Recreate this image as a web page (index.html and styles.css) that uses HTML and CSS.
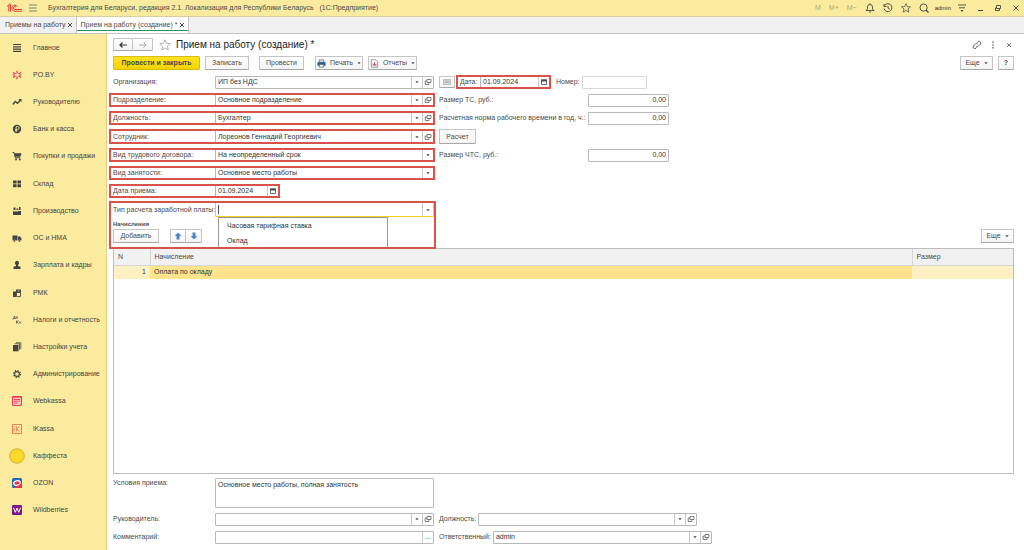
FILE: index.html
```
<!DOCTYPE html>
<html lang="ru">
<head>
<meta charset="utf-8">
<title>Прием на работу (создание)</title>
<link rel="stylesheet" href="styles.css">
</head>
<body>
<svg class="defs" aria-hidden="true">
  <symbol id="open" viewBox="0 0 8 8"><path d="M3 1.500h4v3H3zM3 3H1.200v3.500H5V4.500" fill="none" stroke="currentColor" stroke-width=".7"/></symbol>
  <symbol id="caret" viewBox="0 0 8 8"><path d="M2.300 3.200h3.400L4 5.300z" fill="currentColor"/></symbol>
  <symbol id="cal" viewBox="0 0 8 8"><path d="M1.500 2h5v4.500h-5z" fill="none" stroke="currentColor" stroke-width=".8"/><path d="M1 1.500h6v2H1z" fill="currentColor"/></symbol>
  <symbol id="cross" viewBox="0 0 8 8"><path d="M2 2l4 4M6 2L2 6" fill="none" stroke="currentColor"/></symbol>
  <symbol id="star" viewBox="0 0 12 12"><path d="M6 .8l1.500 3.500 3.800.3-2.900 2.500.9 3.800L6 8.900l-3.300 2 .9-3.800L.7 4.600l3.800-.3z" fill="none" stroke="currentColor" stroke-width=".9"/></symbol>
</svg>

<header class="topbar">
  <svg class="logo" viewBox="0 0 17 10" aria-label="1С"><g fill="none" stroke="#dc3a34" stroke-width="1"><path d="M1 3.500L2.800 2v6.500M4.500 8.500V1.200H3"/><path d="M11.500 3.500A3 3 0 1 0 8.800 8.200H16"/><path d="M9.900 4A1.400 1.400 0 1 0 8.800 6.400H16"/></g></svg>
  <svg class="ico" viewBox="0 0 10 10"><path d="M1 2h8M1 5h8M1 8h8" stroke="#666" stroke-width=".8"/></svg>
  <span class="app-title">Бухгалтерия для Беларуси, редакция 2.1. Локализация для Республики Беларусь &nbsp; (1С:Предприятие)</span>
  <div class="top-tools">
    <span class="mem">M</span><span class="mem">M+</span><span class="mem">M−</span>
    <svg class="ico" viewBox="0 0 10 10"><path d="M1 7.500h8L7.500 6V4a2.500 2.500 0 0 0-5 0v2zM4 9h2M5 .5v1" fill="none" stroke="#444" stroke-width=".9"/></svg>
    <svg class="ico" viewBox="0 0 10 10"><path d="M1.200 3.200A4 4 0 1 1 1 5.500M1 1v2.500h2.500M5 2.800V5l1.800 1" fill="none" stroke="#444" stroke-width=".9"/></svg>
    <svg class="ico"><use href="#star"/></svg>
    <svg class="ico" viewBox="0 0 10 10"><circle cx="4.600" cy="4.600" r="3.600" fill="none" stroke="#444" stroke-width=".9"/><path d="M7 7l2.500 2.500" stroke="#444" stroke-width="1.200"/></svg>
    <span class="user">admin</span>
    <svg class="ico" viewBox="0 0 10 10"><path d="M1 2h8M2 4.800h6" stroke="#444" stroke-width=".9"/><path d="M3.500 7h3L5 9z" fill="#444"/></svg>
    <svg class="ico" viewBox="0 0 10 10"><path d="M3 7.500h5" stroke="#444"/></svg>
    <svg class="ico" viewBox="0 0 10 10"><path d="M3.500 2.500h4v3h-4zM2.500 4.500v3h4v-2" fill="none" stroke="#444" stroke-width=".9"/></svg>
    <svg class="ico" viewBox="0 0 10 10"><path d="M2.500 2.500l5 5M7.500 2.500l-5 5" stroke="#444" stroke-width=".9"/></svg>
  </div>
</header>

<nav class="tabs">
  <div class="tab"><a href="#list">Приемы на работу</a><button class="bare" aria-label="Закрыть"><svg class="s8"><use href="#cross"/></svg></button></div>
  <div class="tab active"><a href="#doc">Прием на работу (создание) *</a><button class="bare" aria-label="Закрыть"><svg class="s8"><use href="#cross"/></svg></button></div>
</nav>

<div class="body">
  <nav class="side">
    <a href="#1"><svg viewBox="0 0 10 10"><path d="M1 1.500h8M1 3.800h8M1 6.100h8M1 8.400h8" stroke="#444" stroke-width="1.200"/></svg>Главное</a>
    <a href="#2"><svg viewBox="0 0 10 10"><path d="M5 .8v3M5 6.200v3M1 2.500l2.500 1.500M9 2.500L6.500 4M1 7.500L3.500 6M9 7.500L6.500 6M.8 5h2M7.200 5h2" stroke="#e0315a" stroke-width="1.100"/></svg>PO.BY</a>
    <a href="#3"><svg viewBox="0 0 10 10"><path d="M.8 7.500l2.500-3 2.200 1.800L8.500 3" fill="none" stroke="#444" stroke-width="1.300"/><path d="M6.300 2h3.200v3.200z" fill="#444"/></svg>Руководителю</a>
    <a href="#4"><svg viewBox="0 0 10 10"><circle cx="5" cy="5" r="4.200" fill="#444"/><path d="M4.200 8V2.500h1.500a1.400 1.400 0 0 1 0 2.900H3M3 6.700h2.500" fill="none" stroke="#fbeb9e" stroke-width=".8"/></svg>Банк и касса</a>
    <a href="#5"><svg viewBox="0 0 10 10"><path d="M.5 1.500h1.500l1.300 5.300h5" fill="none" stroke="#444"/><path d="M2.300 2.200h7.200L8.400 5.800H3z" fill="#444"/><circle cx="4" cy="8.500" r="1" fill="#444"/><circle cx="7.800" cy="8.500" r="1" fill="#444"/></svg>Покупки и продажи</a>
    <a href="#6"><svg viewBox="0 0 10 10"><path d="M1 1.500h3.600v3H1zM5.400 1.500H9v3H5.400zM1 5.300h3.600v3H1zM5.400 5.300H9v3H5.400z" fill="#444"/></svg>Склад</a>
    <a href="#7"><svg viewBox="0 0 10 10"><path d="M1 9V5l2.500 1V4.800L6 6V5h3v4zM1.500 1.500h2v2.500h-2zM4.500 2.500h1.800v1.500H4.500zM7 1h1.500v3H7z" fill="#444"/></svg>Производство</a>
    <a href="#8"><svg viewBox="0 0 10 10"><path d="M.5 2.500h5v5h-5zM6 3.500h2.200L9.500 5.500v2H6z" fill="#444"/><circle cx="2.500" cy="8" r="1.100" fill="#444" stroke="#fbeb9e" stroke-width=".4"/><circle cx="7.500" cy="8" r="1.100" fill="#444" stroke="#fbeb9e" stroke-width=".4"/></svg>ОС и НМА</a>
    <a href="#9"><svg viewBox="0 0 10 10"><path d="M5 .8a2.100 2.300 0 0 1 1 4.300v.8l2.500.9V9h-7V6.800L4 5.900v-.8A2.100 2.300 0 0 1 5 .8z" fill="#444"/></svg>Зарплата и кадры</a>
    <a href="#10"><svg viewBox="0 0 10 10"><path d="M1 3.500h3V9H1zM4 1.500h5v3H4z" fill="#444"/><path d="M4.500 4.500h4V8.600h-4zM5 4V2.500h3" fill="none" stroke="#444" stroke-width=".9"/><path d="M5.500 3h2" stroke="#fbeb9e" stroke-width=".7"/></svg>РМК</a>
    <a href="#11"><svg viewBox="0 0 10 10"><path d="M1 4.500L2.500 1 3.500 3.800M1.500 3.500h2M4 2h2M5 2v2M4.500 5.500v3M6.500 5.500L4.800 7l1.700 1.500M7 6.500l2 2M9 6.500l-2 2" fill="none" stroke="#555" stroke-width=".8"/></svg>Налоги и отчетность</a>
    <a href="#12"><svg viewBox="0 0 10 10"><path d="M1 3h5.500v6.300H1z" fill="#444"/><path d="M2.500 1.800h5v6M4 .8h4.800v6.200" fill="none" stroke="#444" stroke-width=".8"/></svg>Настройки учета</a>
    <a href="#13"><svg viewBox="0 0 10 10"><circle cx="5" cy="5" r="2.400" fill="none" stroke="#444" stroke-width="1.100"/><circle cx="5" cy="5" r="3.400" fill="none" stroke="#444" stroke-width="1.300" stroke-dasharray="1.300 1.370"/></svg>Администрирование</a>
    <a href="#14"><svg viewBox="0 0 10 10"><path d="M.6.6h8.800v8.800H.6z" fill="#fbd5c5" stroke="#ea2a4d"/><path d="M.5 1.200h9M2 3.500h6M2 5.200h6M2 7h3.500" stroke="#ea2a4d" stroke-width=".9"/></svg>Webkassa</a>
    <a href="#15"><svg viewBox="0 0 10 10"><path d="M.5.5h9v9h-9z" fill="none" stroke="#e5644f" stroke-width=".8"/><path d="M2 4v3.500M2 2.300v.8M4.300 2.300v5.200M7.500 2.300L4.500 5l3 2.500" fill="none" stroke="#e5644f" stroke-width=".8"/></svg>iKassa</a>
    <a href="#16"><svg class="big" viewBox="0 0 16 16"><circle cx="8" cy="8" r="7.300" fill="#fbd928" stroke="#b99a2a" stroke-width=".7"/><circle cx="8" cy="8" r="5" fill="none" stroke="#edc81c" stroke-width=".6" stroke-dasharray="1 1"/></svg>Каффеста</a>
    <a href="#17"><svg viewBox="0 0 10 10"><rect width="10" height="10" rx="1.500" fill="#2468b4"/><path d="M10 4v4.500A1.500 1.500 0 0 1 8.500 10H2z" fill="#f0304c"/><ellipse cx="5" cy="5" rx="3.400" ry="2.200" transform="rotate(-15 5 5)" fill="#f0304c" stroke="#fff" stroke-width="1.200"/></svg>OZON</a>
    <a href="#18"><svg viewBox="0 0 10 10"><rect width="10" height="10" rx="1" fill="#7d1b8d"/><path d="M1.500 2.800l1.800 4.500L5 3.200l1.700 4.100 1.800-4.500" fill="none" stroke="#fff"/></svg>Wildberries</a>
  </nav>

  <main class="doc">
    <div class="title-row">
      <div class="pair nav-pair"><button class="btn" aria-label="Назад"><svg class="arr" viewBox="0 0 10 8"><path d="M9 4H2M4.500 1.500L2 4l2.500 2.500" fill="none" stroke="#333" stroke-width="1.200"/></svg></button><button class="btn" aria-label="Вперед"><svg class="arr" viewBox="0 0 10 8"><path d="M1 4h7M5.500 1.500L8 4 5.500 6.500" fill="none" stroke="#aaa"/></svg></button></div>
      <svg class="fav"><use href="#star"/></svg>
      <h1>Прием на работу (создание) *</h1>
      <div class="title-tools">
        <svg class="ico" viewBox="0 0 10 10"><path d="M4.200 6a1.700 1.700 0 0 0 2.400 0l1.800-1.800A1.700 1.700 0 0 0 6 1.800l-1 1M5.800 4a1.700 1.700 0 0 0-2.400 0L1.600 5.800A1.700 1.700 0 0 0 4 8.200l1-1" fill="none" stroke="#555" stroke-width=".9"/></svg>
        <svg class="ico" viewBox="0 0 10 10"><path d="M5 1.500v1.500M5 4.300v1.500M5 7.100v1.500" stroke="#555" stroke-width="1.200"/></svg>
        <svg class="ico" viewBox="0 0 10 10"><path d="M3 3l4 4M7 3L3 7" stroke="#666" stroke-width=".9"/></svg>
      </div>
    </div>

    <div class="toolbar">
      <button class="btn primary">Провести и закрыть</button>
      <button class="btn save">Записать</button>
      <button class="btn post">Провести</button>
      <button class="btn print"><svg class="s9" viewBox="0 0 10 10"><path d="M2.500 1h5v2.500h-5z" fill="#fff" stroke="#456" stroke-width=".8"/><path d="M.5 3.500h9v4h-9z" fill="#2f5f93"/><path d="M2.500 6h5v3h-5z" fill="#fff" stroke="#456" stroke-width=".8"/></svg>Печать<svg class="s8 drop"><use href="#caret"/></svg></button>
      <button class="btn reports"><svg class="s9" viewBox="0 0 10 10"><path d="M1.500.8h5L8.500 3v6.200h-7z" fill="#fff" stroke="#777" stroke-width=".8"/><path d="M3.500 7.500V5" stroke="#2f5f93"/><path d="M5 7.500v-4" stroke="#d33"/><path d="M6.500 7.500v-2" stroke="#444"/></svg>Отчеты<svg class="s8 drop"><use href="#caret"/></svg></button>
      <button class="btn more">Еще<svg class="s8 drop"><use href="#caret"/></svg></button>
      <button class="btn help">?</button>
    </div>

    <div class="form">
      <div class="row"><label for="org">Организация:</label><div class="field"><input id="org" value="ИП без НДС"><button aria-label="Выбрать"><svg><use href="#caret"/></svg></button><button aria-label="Открыть"><svg><use href="#open"/></svg></button></div></div>
      <div class="row">
        <button class="btn list-btn" aria-label="Список"><svg class="s8" viewBox="0 0 8 8"><path d="M.5 1.500h7v5h-7z" fill="#ddd" stroke="#aaa" stroke-width=".7"/><path d="M1.500 3h5M1.500 4.500h5" stroke="#999" stroke-width=".6"/></svg></button>
        <div class="date-box marked"><label for="date">Дата:</label><div class="field"><input id="date" value="01.09.2024"><button aria-label="Календарь"><svg><use href="#cal"/></svg></button></div></div>
        <label for="num" class="num-label">Номер:</label><div class="field num"><input id="num"></div>
      </div>

      <div class="row marked"><label for="dep">Подразделение:</label><div class="field"><input id="dep" value="Основное подразделение"><button aria-label="Выбрать"><svg><use href="#caret"/></svg></button><button aria-label="Открыть"><svg><use href="#open"/></svg></button></div></div>
      <div class="row"><label class="wide" for="ts">Размер ТС, руб.:</label><div class="field sum"><input id="ts" value="0,00"></div></div>

      <div class="row marked"><label for="pos">Должность:</label><div class="field"><input id="pos" value="Бухгалтер"><button aria-label="Выбрать"><svg><use href="#caret"/></svg></button><button aria-label="Открыть"><svg><use href="#open"/></svg></button></div></div>
      <div class="row"><label class="wide" for="norm">Расчетная норма рабочего времени в год, ч.:</label><div class="field sum"><input id="norm" value="0,00"></div></div>

      <div class="row marked"><label for="emp">Сотрудник:</label><div class="field"><input id="emp" value="Лореонов Геннадий Георгиевич"><button aria-label="Выбрать"><svg><use href="#caret"/></svg></button><button aria-label="Открыть"><svg><use href="#open"/></svg></button></div></div>
      <div class="row"><button class="btn calc">Расчет</button></div>

      <div class="row marked"><label for="kind">Вид трудового договора:</label><div class="field"><input id="kind" value="На неопределенный срок"><button aria-label="Выбрать"><svg><use href="#caret"/></svg></button></div></div>
      <div class="row"><label class="wide" for="chts">Размер ЧТС, руб.:</label><div class="field sum"><input id="chts" value="0,00"></div></div>

      <div class="row marked"><label for="busy">Вид занятости:</label><div class="field"><input id="busy" value="Основное место работы"><button aria-label="Выбрать"><svg><use href="#caret"/></svg></button></div></div>
      <div class="row"></div>

      <div class="row marked short"><label for="hired">Дата приема:</label><div class="field"><input id="hired" value="01.09.2024"><button aria-label="Календарь"><svg><use href="#cal"/></svg></button></div></div>
    </div>

    <div class="pay">
      <div class="pay-group marked">
        <div class="row"><label for="type">Тип расчета заработной платы:</label>
          <div class="field focus"><span class="caret"></span><input id="type"><button aria-label="Выбрать"><svg><use href="#caret"/></svg></button>
            <ul class="menu"><li>Часовая тарифная ставка</li><li>Оклад</li></ul>
          </div>
        </div>
        <h2>Начисления</h2>
        <div class="cmds">
          <button class="btn add">Добавить</button>
          <div class="pair"><button class="btn" aria-label="Вверх"><svg class="s8" viewBox="0 0 8 8"><path d="M4 .5l3.300 3.500H5.500v3.500h-3V4H.7z" fill="#4b86c6"/></svg></button><button class="btn" aria-label="Вниз"><svg class="s8" viewBox="0 0 8 8"><path d="M4 7.500L.7 4h1.800V.5h3V4h1.800z" fill="#4b86c6"/></svg></button></div>
        </div>
      </div>
      <button class="btn more">Еще<svg class="s8 drop"><use href="#caret"/></svg></button>
    </div>

    <div class="grid-box">
      <table>
        <thead><tr><th class="c-n">N</th><th>Начисление</th><th class="c-size">Размер</th></tr></thead>
        <tbody><tr><td class="c-n">1</td><td class="current">Оплата по окладу</td><td></td></tr></tbody>
      </table>
    </div>

    <div class="bottom">
      <div class="row tall"><label for="terms">Условия приема:</label><textarea id="terms">Основное место работы, полная занятость</textarea></div>
      <div class="row"></div>
      <div class="row"><label for="head">Руководитель:</label><div class="field"><input id="head"><button aria-label="Выбрать"><svg><use href="#caret"/></svg></button><button aria-label="Открыть"><svg><use href="#open"/></svg></button></div></div>
      <div class="row"><label class="auto" for="hpos">Должность:</label><div class="field fixed"><input id="hpos"><button aria-label="Выбрать"><svg><use href="#caret"/></svg></button><button aria-label="Открыть"><svg><use href="#open"/></svg></button></div></div>
      <div class="row"><label for="note">Комментарий:</label><div class="field"><input id="note"><button>...</button></div></div>
      <div class="row"><label class="auto" for="resp">Ответственный:</label><div class="field fixed"><input id="resp" value="admin"><button aria-label="Выбрать"><svg><use href="#caret"/></svg></button><button aria-label="Открыть"><svg><use href="#open"/></svg></button></div></div>
    </div>
  </main>
</div>
</body>
</html>
```
FILE: styles.css
```
* { box-sizing: border-box; }
html, body { height: 100%; }
body {
  margin: 0;
  display: flex;
  flex-direction: column;
  font: 7px/10px "Liberation Sans", Arial, sans-serif;
  color: #4a4a4a;
  background: #fff;
}
button, input, textarea { font: inherit; color: inherit; margin: 0; padding: 0; }
a { color: inherit; text-decoration: none; }
svg { display: block; flex: none; }
.defs { position: absolute; width: 0; height: 0; }
.s8 { width: 8px; height: 8px; }
.s9 { width: 9px; height: 9px; }
.ico { width: 10px; height: 10px; }

.topbar {
  display: flex;
  align-items: center;
  flex: none;
  height: 17px;
  padding: 0 3px 0 6px;
  background: #fbeb9e;
  border-bottom: 1px solid #d8cf9f;
}
.logo { width: 17px; height: 10px; margin-right: 5px; }
.app-title { margin-left: 10px; white-space: nowrap; }
.top-tools { display: flex; align-items: center; gap: 8px; margin-left: auto; }
.mem { color: #b3a873; }
.user { color: #333; font-size: 6px; margin: 0 -2px; }

.tabs {
  display: flex;
  flex: none;
  height: 17px;
  background: #f1f1f1;
  border-bottom: 1px solid #c4c4c4;
}
.tab { display: flex; align-items: center; padding: 0 2px 0 5px; border-right: 1px solid #c4c4c4; }
.tab.active { gap: 1px; padding-left: 4px; background: #fff; box-shadow: inset 0 -2px #fff, inset 0 -3px #1d9b57; }
.bare { border: 0; background: none; }

.body { display: flex; flex: 1; min-height: 0; }
.side {
  display: grid;
  grid-auto-rows: 1fr;
  flex: none;
  width: 107px;
  padding-bottom: 26px;
  background: #fbeb9e;
  border-right: 1px solid #e4d27c;
}
.side a { display: flex; align-items: center; gap: 11px; padding-left: 12px; color: #444; white-space: nowrap; }
.side svg { width: 10px; height: 10px; }
.side .big { width: 16px; height: 16px; margin: 0 -3px; }

.doc { display: flex; flex-direction: column; flex: 1; min-width: 0; padding: 4px 10px 6px 6px; }
.title-row { display: flex; align-items: center; height: 13px; }
h1 { margin: 0 0 0 5px; font-size: 10px; line-height: 13px; font-weight: normal; color: #222; }
.fav { width: 12px; height: 12px; margin-left: 6px; color: #aaa; }
.title-tools { display: flex; gap: 6px; margin-left: auto; }

.btn {
  display: flex;
  align-items: center;
  justify-content: center;
  flex: none;
  height: 14px;
  border: 1px solid #c4c4c4;
  border-bottom-color: #a8a8a8;
  border-radius: 1px;
  background: linear-gradient(#fff, #f4f4f4);
}
.pair { display: flex; }
.pair .btn { width: 16px; }
.pair .btn + .btn { border-left: 0; }
.nav-pair .btn { width: 20px; height: 13px; }
.arr { width: 10px; height: 8px; }
.toolbar { display: flex; margin-top: 5px; gap: 5px; }
.drop { margin: 0 -2px; }
.primary { width: 87px; font-weight: bold; background: linear-gradient(#ffe320, #f7d400); border-color: #d9bc10; }
.save { width: 44px; }
.post { width: 45px; margin-left: 5px; }
.print { width: 48px; gap: 4px; margin-left: 6px; }
.reports { width: 49px; gap: 4px; }
.more { width: 33px; gap: 4px; margin-left: auto; }
.help { width: 16px; font-weight: bold; }

.form, .bottom { display: grid; grid-template-columns: 321px 1fr; column-gap: 5px; row-gap: 4px; }
.form { margin-top: 5px; }
.row { display: flex; align-items: center; position: relative; min-height: 14px; }
.row > label { flex: none; width: 102px; white-space: nowrap; }
.row > label.wide { width: 149px; }
.row > label.auto { width: auto; margin-right: 2px; }
.field {
  display: flex;
  flex: 1;
  min-width: 0;
  height: 13px;
  position: relative;
  border: 1px solid #b8b8b8;
  border-radius: 1px;
  background: #fff;
}
.field input { flex: 1; min-width: 0; width: 100%; border: 0; padding: 0 2px; background: none; outline: 0; color: #333; }
.field button {
  display: flex;
  align-items: center;
  justify-content: center;
  width: 11px;
  border: 0;
  border-left: 1px solid #c8c8c8;
  background: none;
}
.field button svg { width: 8px; height: 8px; }
.field.sum { flex: none; width: 81px; }
.field.sum input { text-align: right; }
.field.fixed { flex: none; width: 219px; }
.field.num { flex: none; width: 65px; border-color: #d8d8d8; }
.row > label.num-label { width: 26px; margin-left: 5px; }
.list-btn { width: 16px; height: 12px; }
.date-box { display: flex; align-items: center; position: relative; width: 95px; height: 14px; margin-left: 1px; padding: 0 1px 0 4px; }
.date-box label { width: 20px; }
.short { width: 166px; }
.calc { width: 37px; height: 15px; }

/* red frames drawn over the fields to be filled in */
.marked::after {
  content: "";
  position: absolute;
  inset: 0 -1px 0 -4px;
  border: 2px solid #d9534a;
  pointer-events: none;
}
.date-box.marked::after { inset: 0; }

.pay { display: flex; align-items: flex-end; margin-top: 4px; }
.pay-group { position: relative; width: 321px; }
.pay-group.marked::after { inset: -1px -2px -6px -4px; z-index: 2; }
.field.focus { height: 15px; border-color: #f2cf1d; }
.caret { align-self: center; width: 1px; height: 9px; margin-left: 2px; background: #555; }
.menu {
  position: absolute;
  z-index: 1;
  top: 14px;
  left: 2px;
  width: 170px;
  margin: 0;
  padding: 0 8px;
  list-style: none;
  background: #fff;
  border: 1px solid #999;
  color: #333;
  line-height: 15px;
}
h2 { margin: 3px 0 0; font-size: 6px; line-height: 9px; font-weight: bold; }
.cmds { display: flex; gap: 11px; }
.add { width: 46px; }

.grid-box { flex: 1; min-height: 40px; margin: 5px 0 4px; border: 1px solid #bdbdbd; }
table { width: 100%; border-collapse: collapse; table-layout: fixed; }
th { height: 16px; padding: 0 4px; background: #f1f1f1; border-right: 1px solid #d6d6d6; border-bottom: 1px solid #d6d6d6; font-weight: normal; text-align: left; }
th:last-child { border-right: 0; }
td { height: 14px; padding: 0 4px; background: #fff1c4; color: #333; }
td.current { background: #ffe48d; }
.c-n { width: 36px; }
td.c-n { text-align: right; }
.c-size { width: 101px; }

.tall { align-items: flex-start; }
textarea { flex: 1; height: 30px; padding: 1px 2px; border: 1px solid #b8b8b8; border-radius: 1px; resize: none; color: #333; outline: 0; }
```
